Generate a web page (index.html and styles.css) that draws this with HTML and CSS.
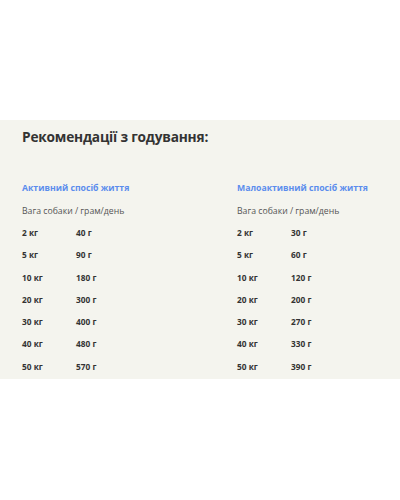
FILE: index.html
```html
<!DOCTYPE html>
<html lang="uk">
<head>
<meta charset="utf-8">
<title>Рекомендації з годування</title>
<link rel="stylesheet" href="styles.css">
</head>
<body>
<div class="spacer"></div>
<section class="feeding">
  <h2 class="title">Рекомендації з годування:</h2>
  <div class="cols">
    <div class="col">
      <h3 class="col-head">Активний спосіб життя</h3>
      <p class="sub">Вага собаки / грам/день</p>
      <div class="row"><span class="w">2 кг</span><span>40 г</span></div>
      <div class="row"><span class="w">5 кг</span><span>90 г</span></div>
      <div class="row"><span class="w">10 кг</span><span>180 г</span></div>
      <div class="row"><span class="w">20 кг</span><span>300 г</span></div>
      <div class="row"><span class="w">30 кг</span><span>400 г</span></div>
      <div class="row"><span class="w">40 кг</span><span>480 г</span></div>
      <div class="row"><span class="w">50 кг</span><span>570 г</span></div>
    </div>
    <div class="col">
      <h3 class="col-head">Малоактивний спосіб життя</h3>
      <p class="sub">Вага собаки / грам/день</p>
      <div class="row"><span class="w">2 кг</span><span>30 г</span></div>
      <div class="row"><span class="w">5 кг</span><span>60 г</span></div>
      <div class="row"><span class="w">10 кг</span><span>120 г</span></div>
      <div class="row"><span class="w">20 кг</span><span>200 г</span></div>
      <div class="row"><span class="w">30 кг</span><span>270 г</span></div>
      <div class="row"><span class="w">40 кг</span><span>330 г</span></div>
      <div class="row"><span class="w">50 кг</span><span>390 г</span></div>
    </div>
  </div>
</section>
</body>
</html>
```
FILE: styles.css
```css
html, body {
  margin: 0;
  padding: 0;
  background: #ffffff;
  font-family: "Open Sans", "Noto Sans", sans-serif;
  color: #333333;
}
.spacer {
  height: 120px;
}
.feeding {
  background: #f4f4ee;
  padding: 7px 22px 1px 22px;
}
.title {
  margin: 0;
  font-size: 13.7px;
  line-height: 20px;
  font-weight: 700;
  letter-spacing: -0.2px;
  color: #333333;
}
.cols {
  display: grid;
  grid-template-columns: 215px 1fr;
  margin-top: 34px;
}
.col-head {
  margin: 0;
  font-size: 8.7px;
  line-height: 14px;
  font-weight: 700;
  color: #5b8ded;
}
.sub {
  margin: 9px 0 4px 0;
  font-size: 8.7px;
  line-height: 14px;
  color: #555555;
}
.row {
  display: flex;
  font-size: 8.3px;
  line-height: 22.3px;
  font-weight: 700;
  color: #333333;
}
.w {
  width: 54px;
}
```
